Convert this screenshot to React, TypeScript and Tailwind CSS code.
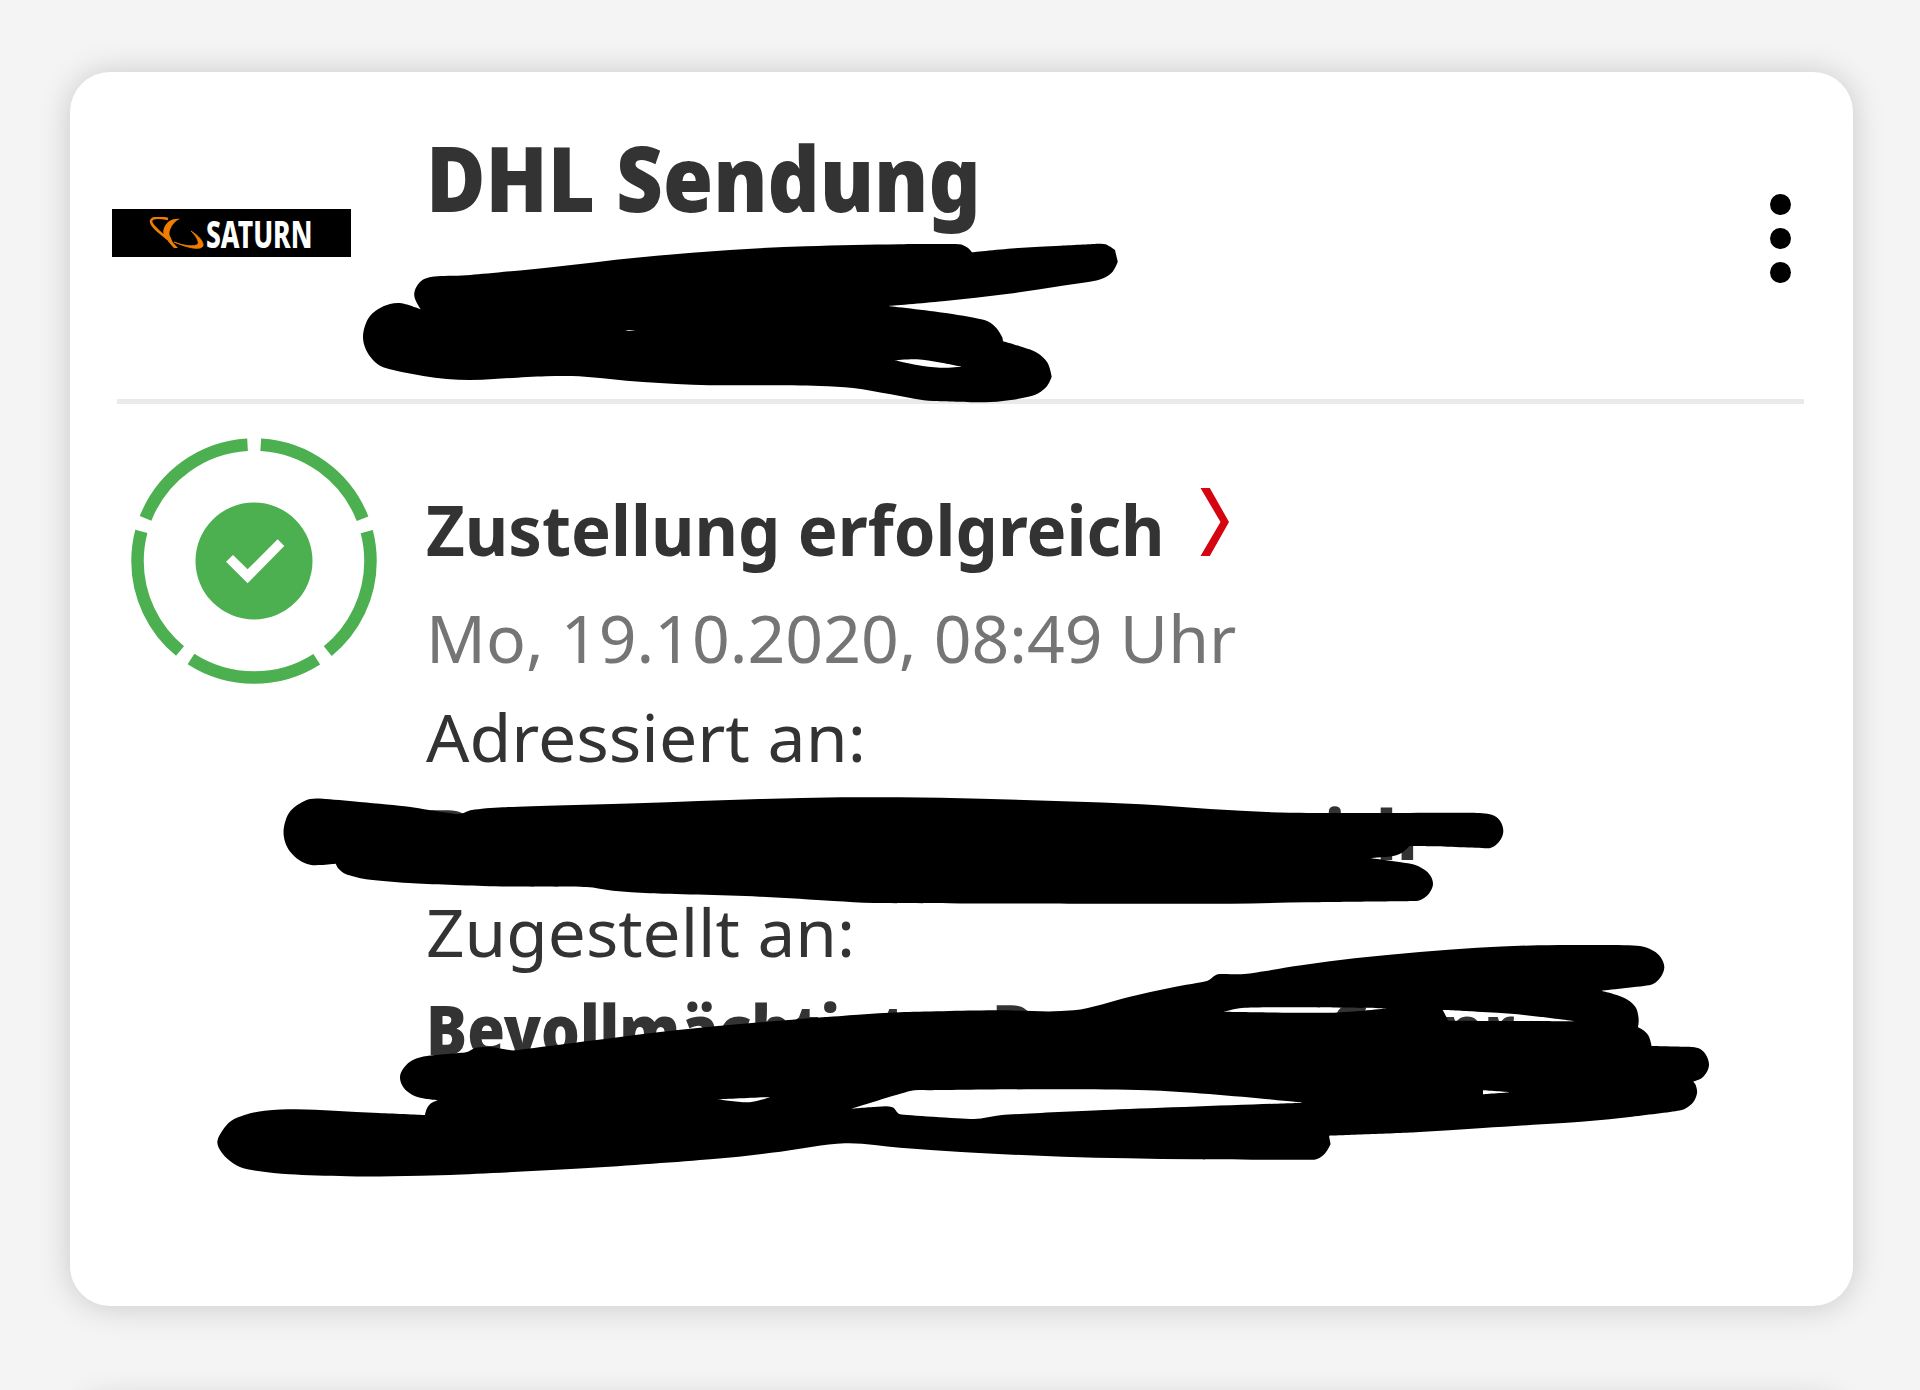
import type { ReactNode } from 'react'

const HEADER_MARK = [
  '420.7,309.3 401.7,303.3 390,304 378.3,309 370,316 365,325.7 363,336.7 365,347.3 370.7,357.3 380,365.7 393.3,370 423.3,376 446.7,379 470,380 494,379 546,376.3 579,376.3 626.5,380.7 692.6,384.7 758.7,385.3 820,386 853,388 890.8,394.3 914.4,398.7 933.3,401 985,402.3 1008.8,400.3 1034.7,395 1046.5,386.7 1051.7,376.7 1047.5,362.7 1037,352.7 1023,347.3 1003,341.3 1002,336.7 995.6,327.3 985.2,320.3 947.4,313.3 888.4,306 942.7,301.3 1008.8,293.7 1060.7,286 1098.4,280 1111.7,272.7 1117.8,261.7 1115,250 1105.5,244.3 1098.4,243.7 1060.7,245.7 1018.2,248 972,252.3 967.7,247.7 959.2,244.3 900,244.3 805.9,246.3 730,250 636,257.7 555.7,266.7 470.8,275 437.8,276.3 423.6,279.3 416.5,286.7 414.2,294.7 417,303.3',
  '894.6,360.3 916.7,359.3 940,362.5 961.6,366.7 940,367.7 917,365',
  '623.7,331.3 630,330 636,330',
]

const ADDRESSEE_MARK = [
  '458.6,814 429,810 408.8,806.7 359.8,802 323,798.7 310,799 299.4,803.7 290.4,811 285.5,820.7 283.5,832.3 285.5,843.3 290.4,852 299.4,860.3 310,864.7 321,865 335.7,863.7 338.6,868.7 345.5,874 366,879.3 408.8,883 494.5,886.3 586.3,887 612.9,890.7 649.6,893.3 759.8,896.7 833.3,901 874,903 1083.7,903.7 1230.6,903.7 1308,902.3 1416,901 1424.5,897.7 1430,892 1433,884.3 1430.6,876 1424.5,869.7 1412,864 1369.4,858 1391.8,856.3 1402,852.7 1409.4,846 1434.7,846.3 1487.8,848.3 1495,845.7 1500.8,839.3 1503.3,830.7 1500,820.7 1491.8,814.7 1471.4,812.7 1289.8,812.7 1210,809 1140.8,804.3 1063.3,801.3 981.6,798.7 900,797.3 841,797.3 759.8,799 637,803.3 502.7,807.3 472,810',
]

const RECIPIENT_MARK = [
  '425,1115 378.6,1113 334,1110.7 296,1109.3 264.7,1110.7 244.6,1115 231,1121 222.3,1130.7 217.4,1141 219.6,1149.3 226.8,1158.3 239.3,1166.7 258,1171 289.3,1174.3 347.3,1176.3 392,1176.3 450,1175 584,1168.3 713.4,1159 780.4,1151.7 845,1143.3 900,1147.7 961,1152 1063,1156.7 1193.9,1159.3 1314.3,1159.7 1324.5,1154 1330.6,1144 1329,1135.7 1415.7,1132.3 1483,1128 1587,1121.3 1632,1116.7 1681,1110.3 1692.4,1103.3 1697,1093.3 1695.7,1085 1693.3,1081.7 1701.4,1078.3 1707,1071.7 1709,1064 1706,1055 1700.6,1049.3 1692.4,1047 1651.6,1046 1649,1036.7 1644.3,1031 1638,1027.3 1638.6,1018.3 1635.3,1006.7 1623.9,997.7 1601.4,990.7 1650.4,985 1659.8,978.3 1664.3,967.7 1661,957.7 1653.7,951 1640,946 1603.5,945 1538,945.3 1477,947.7 1419.8,952 1354.5,958.3 1301.4,965.3 1244.3,974 1217.8,974.3 1207.6,980.7 1170.8,987.7 1130,996.7 1073.5,1010.3 993.9,1010.3 900,1012.3 857.8,1014.7 751.6,1023 678,1030 588.4,1041 515,1050.3 504.7,1049.3 492.4,1047.3 476,1047.7 466,1052.3 427,1056 412.9,1060 403.9,1067.7 400,1076.7 403,1086.7 412,1094.7 423,1098.3 438,1100.3 431,1103.3 426.7,1109',
  '718,1099.3 770,1097 749.6,1102.3',
  '851.6,1108.7 910,1091 928.6,1090.3 1147,1090.3 1304,1102.7 1104,1110 1002,1115 973.5,1119 900,1114.3 892.4,1107.3 878,1106.7',
  '1223.9,1011.7 1242,1008 1293,1007.3 1387,1008.3 1334,1012.7',
  '1442.7,1010 1477,1011.7 1517.8,1014.3 1575.7,1021.3 1448.4,1020.7',
  '1483,1090.3 1510.4,1092.3 1483,1094.3',
]

// Rounds an outline through its points; sharp turns stay corners.
function smooth(outline: string) {
  const pts = outline.split(' ').map((p) => p.split(',').map(Number))
  const n = pts.length
  const knots = pts.map(([x, y], i) => {
    const [px, py] = pts[(i + n - 1) % n]
    const [nx, ny] = pts[(i + 1) % n]
    const a = Math.hypot(x - px, y - py)
    const b = Math.hypot(nx - x, ny - y)
    const cos = ((x - px) * (nx - x) + (y - py) * (ny - y)) / (a * b)
    if (cos < 0.74) return { tx: 0, ty: 0, reach: 0 }
    // the chord follows the longer neighbour, so long runs don't bulge
    const len = Math.hypot(nx - px, ny - py)
    return { tx: (nx - px) / len, ty: (ny - py) / len, reach: Math.min(a, b) * 0.5 }
  })
  let d = `M${pts[0][0]} ${pts[0][1]}`
  for (let i = 0; i < n; i++) {
    const j = (i + 1) % n
    const [x, y] = pts[i]
    const [ex, ey] = pts[j]
    const third = Math.hypot(ex - x, ey - y) / 3
    const k = Math.min(third, knots[i].reach)
    const m = Math.min(third, knots[j].reach)
    d += `C${x + knots[i].tx * k} ${y + knots[i].ty * k} ${ex - knots[j].tx * m} ${ey - knots[j].ty * m} ${ex} ${ey}`
  }
  return d + 'Z'
}

function Mark({ outlines }: { outlines: string[] }) {
  return <path d={outlines.map(smooth).join('')} fillRule="evenodd" />
}

function SaturnLogo() {
  return (
    <div className="w-[239px] h-12 bg-black flex items-center pl-9">
      <svg className="w-[58px] h-8 shrink-0" viewBox="0 0 58 32" fill="#f07d00">
        <path d="M32 2C25 1 19 4 16 11C15 14 15 16 16 18C19 23 22 27 26 31L30 31C26 27 24 25 23 21C21 18 21 16 22 13C24 8 27 4 32 2Z" />
        <path d="M20 2C10 0 4 0 3 4C3 9 11 15 20 22" fill="none" stroke="#f07d00" strokeWidth="2.6" />
        <path d="M43 14C51 19 56 25 55 29C53 33 42 32 26 25C36 29 47 30 50 27C51 24 48 19 43 14Z" stroke="#f07d00" strokeWidth="0.8" />
      </svg>
      <span className="h-12 leading-[48px] text-[38px] font-extrabold text-white whitespace-nowrap origin-left scale-x-[0.695]">
        SATURN
      </span>
    </div>
  )
}

function DeliveredIcon() {
  return (
    <svg className="w-[246px] h-[246px]" viewBox="-123 -123 246 246">
      <circle
        r="116.5"
        fill="none"
        stroke="#4caf50"
        strokeWidth="12.5"
        strokeDasharray="132.8 13.6"
        strokeDashoffset="-6.8"
        transform="rotate(-90)"
      />
      <circle r="58.5" fill="#4caf50" />
      <path d="M-28 0.7L-21 -6L-6.4 8.3L23.6 -21.7L30.3 -15L-6.4 22.3Z" fill="#fff" />
    </svg>
  )
}

function Line({ className, children }: { className: string; children: ReactNode }) {
  return <div className={`h-20 leading-[80px] flex whitespace-nowrap ${className}`}>{children}</div>
}

export default function App() {
  return (
    <div className="relative w-[1920px] h-[1390px] overflow-hidden bg-[#f4f4f4] pt-[72px] pl-[70px] text-[#333] font-['Noto_Sans',sans-serif]">
      <div className="w-[1783px] h-[1234px] rounded-[40px] bg-white shadow-[0_1px_32px_rgba(0,0,0,0.18)]">
        <div className="h-[327px] flex">
          <div className="w-[356px] shrink-0 pl-[42px] pt-[137px]">
            <SaturnLogo />
          </div>
          <div className="grow pt-[55px]">
            <h1 className="h-[100px] leading-[100px] text-[90px] font-black whitespace-nowrap origin-left scale-x-[0.902]">
              DHL Sendung
            </h1>
          </div>
          <div className="w-[83px] pt-[122px] flex flex-col gap-[13.5px]">
            <span className="size-[20.5px] rounded-full bg-black" />
            <span className="size-[20.5px] rounded-full bg-black" />
            <span className="size-[20.5px] rounded-full bg-black" />
          </div>
        </div>
        <div className="h-[5px] ml-[47px] mr-[49px] bg-[#eaeaea]" />
        <div className="flex">
          <div className="w-[356px] shrink-0 pl-[61px] pt-[34px]">
            <DeliveredIcon />
          </div>
          <div className="pt-[85px]">
            <div className="flex">
              <Line className="w-[774px] text-[69.5px] font-bold">
                <span className="origin-left scale-x-[0.964]">Zustellung erfolgreich</span>
              </Line>
              <svg className="w-[30px] h-[68px] -mt-px" viewBox="0 0 30 68" fill="#d40511">
                <path d="M0.5 0H9.8L29 34L9.8 68H0.5L20.5 34Z" />
              </svg>
            </div>
            <Line className="mt-[29px] text-[65px] text-[#757575]">
              <span className="origin-left scale-x-[1.017]">Mo, 19.10.2020, 08:49 Uhr</span>
            </Line>
            <Line className="mt-[18px] text-[66.5px]">
              <span className="origin-left scale-x-[1.022]">Adressiert an:</span>
            </Line>
            <Line className="mt-[17px] text-[69px] font-black">
              <span className="w-[899px]">D</span>
              <span className="origin-left scale-x-[0.87]">ich</span>
            </Line>
            <Line className="mt-[18px] text-[66.5px]">
              <span className="origin-left scale-x-[1.015]">Zugestellt an:</span>
            </Line>
            <Line className="mt-[17px] text-[69px] font-black">
              <span className="w-[566px] origin-left scale-x-[0.885]">Bevollmächtigter</span>
              <span className="w-[341px] origin-left scale-x-[0.885]">D</span>
              <span className="w-[107px] origin-left scale-x-[0.885]">S</span>
              <span className="origin-left scale-x-[0.95]">nr</span>
            </Line>
          </div>
        </div>
      </div>
      <div className="mt-[94px] w-[1783px] h-40 rounded-[40px] bg-white shadow-[0_1px_32px_rgba(0,0,0,0.18)]" />

      {/* marker strokes over the private lines */}
      <svg className="absolute inset-0 w-[1920px] h-[1390px]" viewBox="0 0 1920 1390">
        <Mark outlines={HEADER_MARK} />
        <Mark outlines={ADDRESSEE_MARK} />
        <Mark outlines={RECIPIENT_MARK} />
      </svg>
    </div>
  )
}
